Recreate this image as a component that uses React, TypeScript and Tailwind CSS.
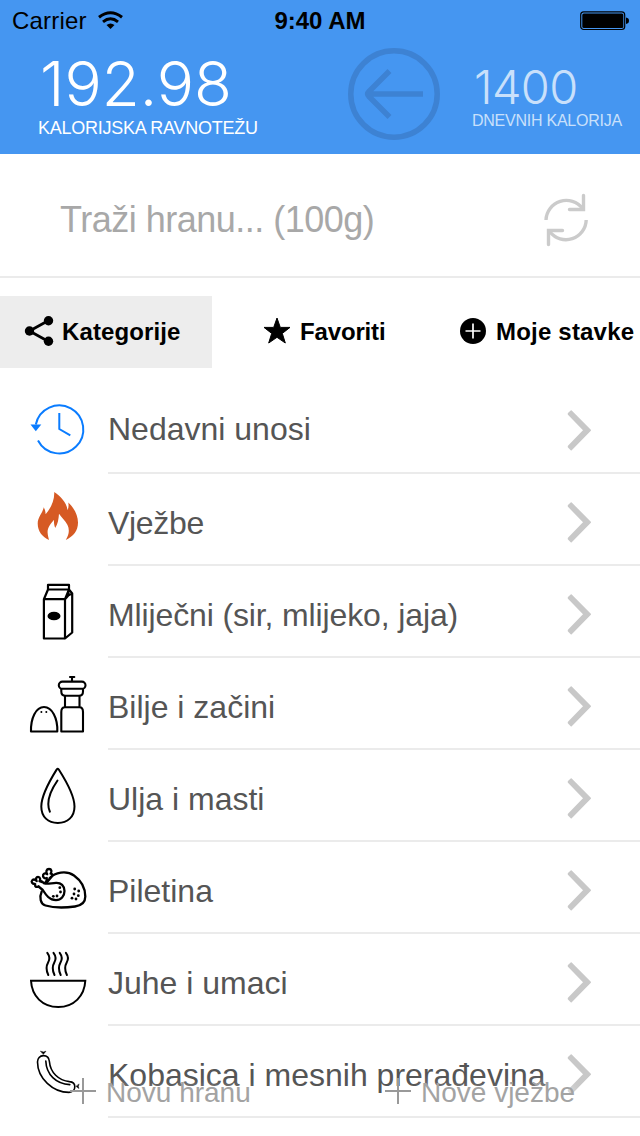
import type { ReactNode } from "react";

const ClockIcon = () => (
  <g fill="none" stroke="#0a7cff" strokeWidth="2">
    <path d="M7.8 42.5A24 24 0 1 1 10 58.5" />
    <path d="M31.3 31V47L42.3 53.3" />
    <path d="M2.5 42.4H13.3L7.8 49.2Z" fill="#0a7cff" stroke="none" />
  </g>
);

const FireIcon = () => (
  <path
    fill="#d65a24"
    d="M26.2 18C32 22 38.5 28 39.6 36.2C40.6 33.6 40.8 31.5 40.3 28.6C46 34 50 41 50 48.5C50 57 45.5 62 37.8 66C41 60.5 41.8 56 39.5 51C37.5 46.6 33.5 43.5 31 39.7C30.5 45 30 50 27.2 53.9C26.2 51 25.8 49 26 45.8C22 50.5 19.4 54 19.6 58.500C19.7 61.5 20.5 63.5 21 66C14.5 63 9.7 57.5 9.7 49.5C9.7 43 15 38.5 15.7 33.2C17 35.5 17.5 37.5 17.6 40.2C23 34 26.7 26 26.2 18Z"
  />
);

const MilkIcon = () => (
  <g fill="none" stroke="#000" strokeWidth="2.200" strokeLinejoin="round" strokeLinecap="round">
    <path d="M15.900 33.200H37V72.500H15.900ZM20 18.800H41V23.500H20ZM20 23.500L15.900 33.200M41 23.500L37 33.200M41 23.500L44.200 27.500V66.500L37 72.500M37 33.200L40.500 29.300L44 27.500M40.300 25.500L40.500 29.300" />
    <ellipse cx="26" cy="50" rx="6.500" ry="4.300" fill="#000" stroke="none" />
  </g>
);

const SpiceIcon = () => (
  <g fill="none" stroke="#000" strokeWidth="2.100" strokeLinejoin="round" strokeLinecap="round">
    <path d="M3 73.500C2.600 60 8 49 16 49S29.800 60 29.300 73.500Z" />
    <path d="M33.300 73.500V54C33.300 51 34.500 49.200 37 49.200H51.500C54 49.200 55 51 55 54V73.500ZM37 38.500V49M51.500 38.500V49" />
    <rect x="30.800" y="23.600" width="26.700" height="7.200" rx="3.600" />
    <path d="M33.300 31V33.500C33.300 36.500 35 37.800 37.500 37.800H51C53.500 37.800 55 36.500 55 33.500V31M44 23V19.300M42 19H46.300" />
    <g fill="#000" stroke="none">
      <circle cx="13.400" cy="54" r="1" />
      <circle cx="18.300" cy="54" r="1" />
    </g>
  </g>
);

const DropIcon = () => (
  <g fill="none" stroke="#000" strokeWidth="2" strokeLinecap="round">
    <path d="M28.800 19.300Q29.700 18.200 30.600 19.300C35.500 27 46.500 44 46.500 56.500C46.500 67 39.500 72.900 29.800 72.900S13.300 67 13.300 56.500C13.300 44 24 27 28.800 19.300Z" />
    <path d="M29.500 30.500C25 37 20.300 45 20.300 54Q20.300 58.500 21.900 61.700" />
  </g>
);

const dots: [number, number][] = [
  [31.8, 45.7], [32.5, 50], [29, 54], [25.3, 54.3],
  [46.7, 47], [50.7, 49], [46, 52], [50.3, 53.7], [44, 56.2], [48, 57],
];

const ChickenIcon = () => (
  <g fill="none" stroke="#000" strokeWidth="2.300" strokeLinejoin="round" strokeLinecap="round">
    <path d="M21.500 36.200C27 30.500 38 28 46 33.500C53 38.500 57.300 46 57.300 54.500C57.300 60 54 63.500 47 64.500C38 65.700 25 65.700 17.500 63.500C12.500 62 11 55.500 13.700 49.500" />
    <path d="M10.500 44.500L14.800 48C18 53 21.500 58.200 28 58.200C33 58.200 36.500 54.200 36.500 49C36.500 44 33 40.500 28 40.800C23.500 41 20 42.300 16.500 41.500L13.700 39.300" />
    <path d="M10.500 44.500C8 45.600 6.500 44.300 7.200 42C4 42.200 2.700 39.600 4.500 38C6 36.900 7.700 37.900 8.700 39.100C7.200 36.800 8.300 34.900 10 34.900C12.300 35 12.800 37.500 11.500 39.200L13.700 40" />
    <path d="M17.200 40.800L19.200 37.600M23.800 34.600L18.600 40.800M18.800 36C16.500 37 14.500 35 15.100 33C15.800 31.200 18 31 19.200 32.200C17.500 29.500 18.500 27 21 27C23.700 27 24 29.700 22.600 31.700C24.500 31.500 25 33.200 23.800 34.600" />
    <g fill="#000" stroke="none">
      {dots.map(([x, y], i) => (
        <circle key={i} cx={x} cy={y} r="1.400" />
      ))}
    </g>
  </g>
);

const SoupIcon = () => (
  <g fill="none" stroke="#000" strokeWidth="2" strokeLinejoin="miter">
    <path d="M3 46.800H57.300C56.500 62 46 73 30.200 73S3.800 62 3 46.800Z" />
    {[19.3, 25.5, 31.7, 37.9].map((x) => (
      <path
        key={x}
        strokeLinecap="round"
        d={`M${x} 18.800C${x + 2.8} 22.500 ${x + 2.8} 25 ${x + 0.8} 28.500S${x - 1.5} 36 ${x + 1} 41`}
      />
    ))}
  </g>
);

const SausageIcon = () => (
  <g fill="none" stroke="#000" strokeWidth="1.600" strokeLinejoin="round" strokeLinecap="round">
    <path d="M15.400 29.600C11.800 29.600 9.500 32.300 9.500 36C9.600 52.500 25 66.400 41 66.400C44.500 66.400 46.800 64 46.800 60.800C46.800 57.800 44.600 55.800 41.500 55.600C30.500 54.500 22.300 46.500 21.400 35.500C21.100 31.800 19 29.600 15.400 29.600Z" />
    <path d="M17.800 35C18.300 48.500 28 57.800 41.800 58.600" />
    <path d="M12.700 25.200L15.400 26L18 25.200L15.400 28.200ZM51 58.300L50.300 60.500L51 62.500L48.200 60.500Z" fill="#000" strokeWidth=".5" />
  </g>
);

const Chevron = () => (
  <svg className="h-[90px] w-[26px] shrink-0" viewBox="0 0 26 90" fill="#c8c8c8" stroke="#c8c8c8" strokeWidth="1.500" strokeLinejoin="round">
    <path d="M1.500 31.600L4.200 29L23.300 48.300L4.200 67.600L1.500 65V64.300L17 48.300L1.500 32.300Z" />
  </svg>
);

const rows: { label: string; icon: ReactNode; text: string }[] = [
  { label: "Nedavni unosi", icon: <ClockIcon />, text: "pt-1" },
  { label: "Vježbe", icon: <FireIcon />, text: "pt-2 tracking-[-.3px]" },
  { label: "Mliječni (sir, mlijeko, jaja)", icon: <MilkIcon />, text: "pt-2 tracking-[-.13px]" },
  { label: "Bilje i začini", icon: <SpiceIcon />, text: "pt-2" },
  { label: "Ulja i masti", icon: <DropIcon />, text: "pt-2" },
  { label: "Piletina", icon: <ChickenIcon />, text: "pt-2" },
  { label: "Juhe i umaci", icon: <SoupIcon />, text: "pt-2" },
  { label: "Kobasica i mesnih prerađevina", icon: <SausageIcon />, text: "pt-2" },
];

const Plus = () => (
  <svg className="h-[26px] w-[26px] shrink-0" viewBox="0 0 26 26" stroke="#999" strokeWidth="2">
    <path d="M13 0V26M0 13H26" />
  </svg>
);

export default function App() {
  return (
    <div className="relative h-[1136px] w-[640px] overflow-hidden bg-white font-['Liberation_Sans',Arial,sans-serif] whitespace-nowrap">
      <header className="h-[154px] bg-[#4596f1]">
        <div className="grid h-10 grid-cols-3 items-center pt-px pr-[11px] pl-3 text-black">
          <div className="flex items-center gap-[11px]">
            <span className="text-[24px] leading-none tracking-[.2px]">Carrier</span>
            <svg className="h-[19px] w-[25px]" viewBox="0 0 25 19" fill="none" stroke="#000" strokeWidth="3">
              <path d="M1 6.200Q12.500-2.800 24 6.200M5 10.800Q12.500 4.800 20 10.800" />
              <path d="M8.500 14Q12.500 10.800 16.500 14L12.500 18Z" fill="#000" stroke="none" />
            </svg>
          </div>
          <span className="pr-px text-center text-[24px] leading-none font-bold">9:40 AM</span>
          <svg className="h-5 w-[49px] justify-self-end" viewBox="0 0 49 20">
            <rect x=".7" y=".9" width="44" height="17.600" rx="3" fill="none" stroke="#000" strokeWidth="1.200" />
            <rect x="2.300" y="2.500" width="41" height="14.500" rx="1.500" />
            <path d="M46 6.500Q49 7 49 9.700T46 13Z" />
          </svg>
        </div>
        <div className="flex h-[114px] items-start">
          <div className="w-[310px] pt-3 pl-[38px] text-white">
            <div className="h-[65px] pl-[2px] font-['Inter'] text-[62px] leading-[64px] font-light tracking-[0px]">192.98</div>
            <div className="text-[18px] leading-[22px] tracking-[-.25px]">KALORIJSKA RAVNOTEŽU</div>
          </div>
          <svg className="mt-2 ml-[38px] h-[92px] w-[92px]" viewBox="0 0 92 92" fill="none" stroke="#3d82d3" strokeWidth="5.500">
            <circle cx="46" cy="46" r="43.200" />
            <path d="M75 46H20M41.500 23L21 43.500Q18.500 46 21 48.500L41.500 69" />
          </svg>
          <div className="pt-[22px] pl-8 text-[#c9e0fb]">
            <div className="h-[50px] pl-[2px] font-['Inter'] text-[47px] leading-[50px] font-light tracking-[-.6px]">1400</div>
            <div className="text-[16px] leading-[18px] tracking-[-.25px]">DNEVNIH KALORIJA</div>
          </div>
        </div>
      </header>

      <section className="flex h-[124px] items-center justify-between border-b-2 border-[#ebebeb] pr-[50px] pl-[60px]">
        <span className="pt-[9px] text-[36px] leading-none tracking-[-.5px] text-[#a8a8a8]">Traži hranu... (100g)</span>
        <svg className="mt-[10px] h-[54px] w-[48px]" viewBox="0 0 48 54" fill="none" stroke="#cbcbcb" strokeWidth="3.400" strokeLinecap="butt">
          <path d="M4 27A20.300 20.300 0 0 1 40.500 15.500M44.200 27A20.300 20.300 0 0 1 8 39" />
          <path d="M41.500 2.500V16.500H27.500M6.500 51.500V37.500H20.500" strokeLinecap="round" />
        </svg>
      </section>

      <nav className="mt-[18px] flex h-[72px] text-[24px] leading-none font-bold text-black">
        <div className="flex w-[212px] items-center gap-2 bg-[#ededed] pl-6">
          <svg className="-mt-[2px] h-[32px] w-[30px]" viewBox="0 0 30 32" stroke="#000" strokeWidth="2.800">
            <path d="M24.500 5.500L5.500 16L24.500 26.500" fill="none" />
            <circle cx="24.500" cy="5.700" r="4.700" stroke="none" />
            <circle cx="5.500" cy="16" r="4.700" stroke="none" />
            <circle cx="24.500" cy="26.300" r="4.700" stroke="none" />
          </svg>
          <span className="tracking-[.1px]">Kategorije</span>
        </div>
        <div className="flex w-[247px] items-center gap-[9px] pl-[51px]">
          <svg className="-mt-[2px] h-7 w-7" viewBox="0 0 28 28" stroke="#000" strokeWidth="1" strokeLinejoin="round">
            <path d="M14 1L17.300 10.400H27L19.300 16.400L22.300 26L14 20.300L5.700 26L8.700 16.400L1 10.400H10.700Z" />
          </svg>
          <span className="tracking-[-.15px]">Favoriti</span>
        </div>
        <div className="flex items-center gap-[9px]">
          <svg className="h-7 w-7" viewBox="0 0 28 28">
            <circle cx="14" cy="13" r="13" />
            <path d="M14 5.500V20.500M6.500 13H21.500" stroke="#fff" strokeWidth="1.700" />
          </svg>
          <span className="tracking-[.2px]">Moje stavke</span>
        </div>
      </nav>

      <main className="pt-[14px]">
        {rows.map((row) => (
          <div key={row.label} className="flex h-[92px] pl-7">
            <svg className="h-[90px] w-[60px] shrink-0" viewBox="0 0 60 90">
              {row.icon}
            </svg>
            <div className="ml-5 flex flex-1 items-center justify-between border-b-2 border-[#ebebeb] pr-[47px]">
              <span className={`w-[459px] text-[32px] leading-none text-[#555] ${row.text}`}>{row.label}</span>
              <Chevron />
            </div>
          </div>
        ))}
      </main>

      <footer className="absolute top-[1061px] left-0 flex h-[60px] w-full items-center text-[28px] leading-none text-[#a3a3a3] [text-shadow:0_0_10px_#fffc]">
        <div className="flex w-[315px] items-center gap-[10px] pl-[70px]">
          <Plus />
          <span className="pt-1">Novu hranu</span>
        </div>
        <div className="flex items-center gap-[10px] pl-[70px]">
          <Plus />
          <span className="pt-1">Nove vježbe</span>
        </div>
      </footer>
    </div>
  );
}
